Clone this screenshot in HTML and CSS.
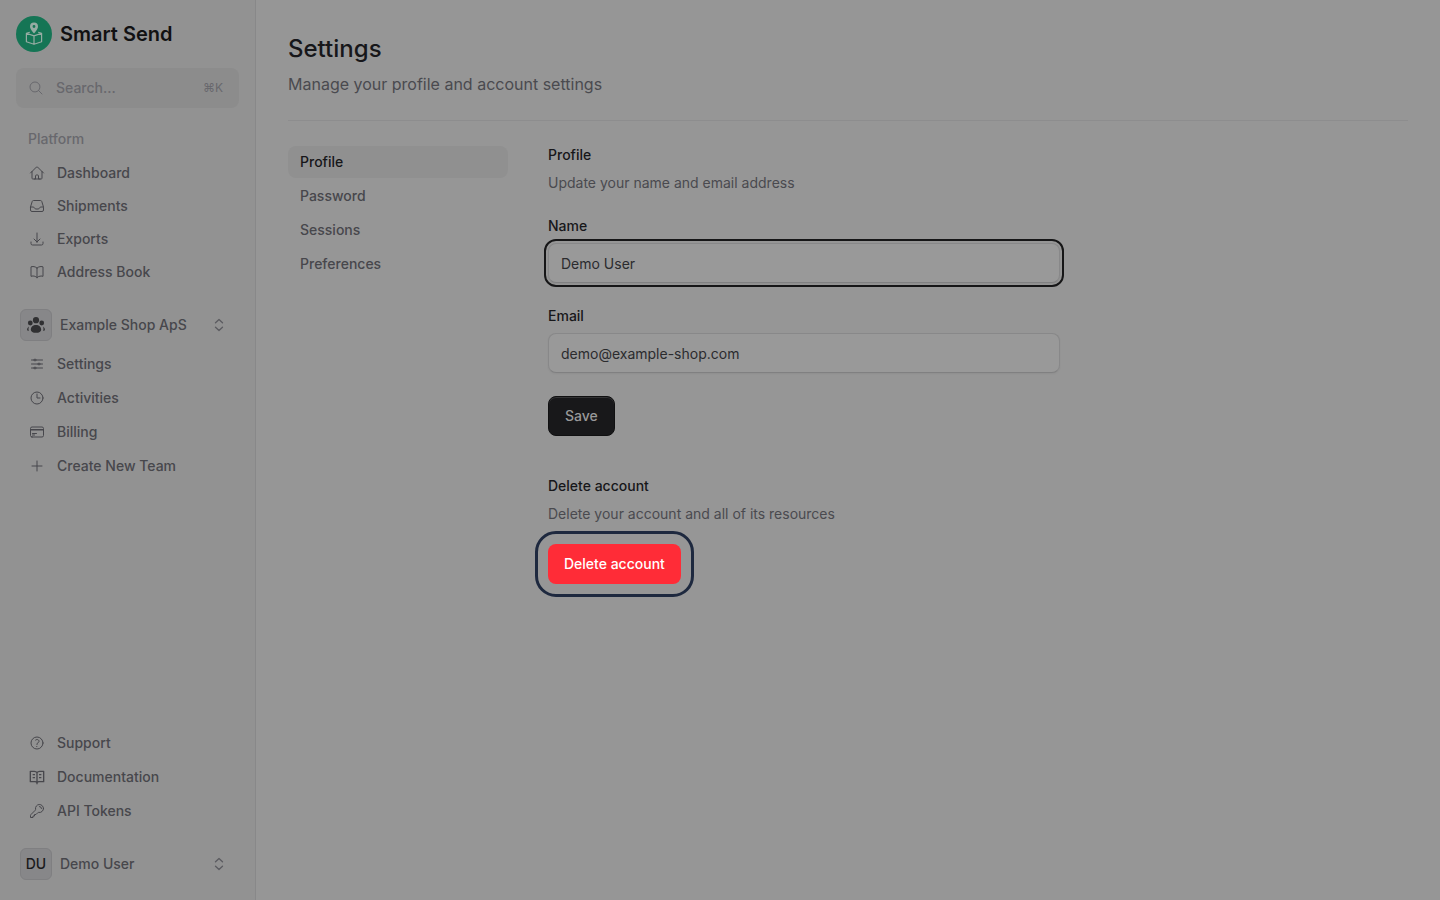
FILE: index.html
```html
<!DOCTYPE html>
<html lang="en">
<head>
  <meta charset="UTF-8">
  <meta name="viewport" content="width=device-width, initial-scale=1.0">
  <title>Settings - Smart Send</title>
  <link rel="stylesheet" href="styles.css">
</head>
<body>
  <aside class="sidebar">
    <a href="#" class="brand">
      <svg class="brand-logo" viewBox="0 0 36 36" fill="none">
        <circle cx="18" cy="18" r="18" fill="#157555"/>
        <path d="M18 6.5a4 4 0 0 0-4 4c0 2.900 4 7 4 7s4-4.100 4-7a4 4 0 0 0-4-4zm0 2.600a1.400 1.400 0 1 1 0 2.800 1.400 1.400 0 0 1 0-2.800z" fill="#96aca3" fill-rule="evenodd"/>
        <path d="M13.800 16.200 10.400 17.300v8.500L18 28.300l7.600-2.500v-8.500l-3.400-1.100M10.400 17.300 18 19.900l7.600-2.600M18 19.900v8.400" stroke="#96aca3" stroke-width="1.200" stroke-linejoin="round"/>
      </svg>
      <span>Smart Send</span>
    </a>

    <button type="button" class="search">
      <svg class="icon" viewBox="0 0 24 24"><path d="m21 21-5.197-5.197m0 0A7.500 7.500 0 1 0 5.196 5.196a7.500 7.500 0 0 0 10.607 10.607Z"/></svg>
      <span>Search...</span>
      <kbd>⌘K</kbd>
    </button>

    <nav class="nav">
      <h2 class="nav-heading">Platform</h2>
      <div class="nav-list tight">
        <a href="#" class="nav-item">
          <svg class="icon" viewBox="0 0 24 24"><path d="m2.250 12 8.954-8.955c.44-.439 1.152-.439 1.591 0L21.750 12M4.500 9.750v10.125c0 .621.504 1.125 1.125 1.125H9.750v-4.875c0-.621.504-1.125 1.125-1.125h2.250c.621 0 1.125.504 1.125 1.125V21h4.125c.621 0 1.125-.504 1.125-1.125V9.750M8.250 21h8.250"/></svg>
          Dashboard
        </a>
        <a href="#" class="nav-item">
          <svg class="icon" viewBox="0 0 24 24"><path d="M2.250 13.500h3.860a2.250 2.250 0 0 1 2.012 1.244l.256.512a2.250 2.250 0 0 0 2.013 1.244h3.218a2.250 2.250 0 0 0 2.013-1.244l.256-.512a2.250 2.250 0 0 1 2.013-1.244h3.859m-19.500.338V18a2.250 2.250 0 0 0 2.250 2.250h15A2.250 2.250 0 0 0 21.750 18v-4.162c0-.224-.034-.447-.1-.661L19.240 5.338a2.250 2.250 0 0 0-2.150-1.588H6.911a2.250 2.250 0 0 0-2.150 1.588L2.350 13.177a2.250 2.250 0 0 0-.1.661Z"/></svg>
          Shipments
        </a>
        <a href="#" class="nav-item">
          <svg class="icon" viewBox="0 0 24 24"><path d="M3 16.500v2.250A2.250 2.250 0 0 0 5.250 21h13.500A2.250 2.250 0 0 0 21 18.750V16.500M16.500 12 12 16.500m0 0L7.500 12m4.500 4.500V3"/></svg>
          Exports
        </a>
        <a href="#" class="nav-item">
          <svg class="icon" viewBox="0 0 24 24"><path d="M12 6.042A8.967 8.967 0 0 0 6 3.750c-1.052 0-2.062.18-3 .512v14.250A8.987 8.987 0 0 1 6 18c2.305 0 4.408.867 6 2.292m0-14.250a8.966 8.966 0 0 1 6-2.292c1.052 0 2.062.18 3 .512v14.250A8.987 8.987 0 0 0 18 18a8.967 8.967 0 0 0-6 2.292m0-14.250v14.250"/></svg>
          Address Book
        </a>
      </div>
    </nav>

    <button type="button" class="profile">
      <span class="avatar">
        <svg class="team" viewBox="0 0 20 20">
          <circle cx="10" cy="5.200" r="3.100"/>
          <circle cx="4.300" cy="8" r="2.400"/>
          <circle cx="15.700" cy="8" r="2.400"/>
          <path d="M10 10c-3 0-5.200 2.100-5.200 4.700 0 2.100 2.100 3.100 5.200 3.100s5.200-1 5.200-3.100c0-2.600-2.200-4.700-5.200-4.700zM3 11.500C1.800 12.200 1.100 13.500 1.100 14.700c0 .7.600 1.100 1.700 1.200-.5-1.600-.3-3.100.2-4.400zM17 11.500c1.200.7 1.900 2 1.900 3.200 0 .7-.6 1.100-1.700 1.200.5-1.600.3-3.100-.2-4.400z"/>
        </svg>
      </span>
      <span class="profile-name">Example Shop ApS</span>
      <svg class="chevrons" viewBox="0 0 16 16"><path d="M4.500 5.800 8 2.500l3.500 3.300M4.500 10.200 8 13.500l3.500-3.300"/></svg>
    </button>

    <nav class="nav-list">
      <a href="#" class="nav-item">
        <svg class="icon" viewBox="0 0 24 24"><path d="M10.500 6h9.750M10.500 6a1.500 1.500 0 1 1-3 0m3 0a1.500 1.500 0 1 0-3 0M3.750 6H7.500m3 12h9.750m-9.750 0a1.500 1.500 0 0 1-3 0m3 0a1.500 1.500 0 0 0-3 0m-3.750 0H7.500m9-6h3.750m-3.750 0a1.500 1.500 0 0 1-3 0m3 0a1.500 1.500 0 0 0-3 0m-9.750 0h9.750"/></svg>
        Settings
      </a>
      <a href="#" class="nav-item">
        <svg class="icon" viewBox="0 0 24 24"><path d="M12 6v6h4.500m4.500 0a9 9 0 1 1-18 0 9 9 0 0 1 18 0Z"/></svg>
        Activities
      </a>
      <a href="#" class="nav-item">
        <svg class="icon" viewBox="0 0 24 24"><path d="M2.250 8.250h19.500M2.250 9h19.500m-16.500 5.250h6m-6 2.250h3m-3.750 3h15a2.250 2.250 0 0 0 2.250-2.250V6.750A2.250 2.250 0 0 0 19.500 4.500h-15a2.250 2.250 0 0 0-2.250 2.250v10.500A2.250 2.250 0 0 0 4.500 19.500Z"/></svg>
        Billing
      </a>
      <a href="#" class="nav-item">
        <svg class="icon" viewBox="0 0 24 24"><path d="M12 4.500v15m7.500-7.500h-15"/></svg>
        Create New Team
      </a>
    </nav>

    <nav class="nav-list bottom">
      <a href="#" class="nav-item">
        <svg class="icon" viewBox="0 0 24 24"><path d="M9.879 7.519c1.171-1.025 3.071-1.025 4.242 0 1.172 1.025 1.172 2.687 0 3.712-.203.179-.43.326-.67.442-.745.361-1.450.999-1.450 1.827v.750M21 12a9 9 0 1 1-18 0 9 9 0 0 1 18 0Zm-9 5.250h.008v.008H12v-.008Z"/></svg>
        Support
      </a>
      <a href="#" class="nav-item">
        <svg class="icon bold" viewBox="0 0 24 24"><path d="M12 5.500v14M12 5.500C11 4 9.500 3.500 8 3.500H2V19H9c1.500 0 2.500.5 3 1.500.5-1 1.500-1.500 3-1.500h7V3.500H16c-1.500 0-3 .5-4 2M5.500 8.500H9M5.500 13H9M15 8.500h3.500M15 13h3.500M12 20v3"/></svg>
        Documentation
      </a>
      <a href="#" class="nav-item">
        <svg class="icon" viewBox="0 0 24 24"><path d="M15.750 5.250a3 3 0 0 1 3 3m3 0a6 6 0 0 1-7.029 5.912c-.563-.097-1.159.026-1.563.43L10.500 17.250H8.250v2.250H6v2.250H2.250v-2.818c0-.597.237-1.170.659-1.591l6.499-6.499c.404-.404.527-1 .430-1.563A6 6 0 1 1 21.750 8.250Z"/></svg>
        API Tokens
      </a>
    </nav>

    <button type="button" class="profile user">
      <span class="avatar">DU</span>
      <span class="profile-name">Demo User</span>
      <svg class="chevrons" viewBox="0 0 16 16"><path d="M4.500 5.800 8 2.500l3.500 3.300M4.500 10.200 8 13.500l3.500-3.300"/></svg>
    </button>
  </aside>

  <main class="main">
    <header class="page-header">
      <h1>Settings</h1>
      <p>Manage your profile and account settings</p>
    </header>

    <div class="content">
      <nav class="tabs">
        <a href="#" class="tab active">Profile</a>
        <a href="#" class="tab">Password</a>
        <a href="#" class="tab">Sessions</a>
        <a href="#" class="tab">Preferences</a>
      </nav>

      <div class="panel">
        <section>
          <h3>Profile</h3>
          <p class="sub">Update your name and email address</p>
          <form class="form">
            <div class="field">
              <label for="name">Name</label>
              <input type="text" id="name" name="name" class="focused" value="Demo User">
            </div>
            <div class="field">
              <label for="email">Email</label>
              <input type="email" id="email" name="email" value="demo@example-shop.com">
            </div>
            <button type="submit" class="btn btn-primary">Save</button>
          </form>
        </section>

        <section class="danger">
          <h3>Delete account</h3>
          <p class="sub">Delete your account and all of its resources</p>
          <button type="button" class="btn btn-danger">Delete account</button>
        </section>
      </div>
    </div>
  </main>
</body>
</html>
```
FILE: styles.css
```css
* {
  box-sizing: border-box;
}

body {
  margin: 0;
  min-height: 100vh;
  display: flex;
  background-color: #969696;
  color: #17171a;
  font-family: Inter, "Liberation Sans", sans-serif;
  font-size: 14px;
  line-height: 20px;
  -webkit-font-smoothing: antialiased;
}

h1,
h2,
h3,
p {
  margin: 0;
  font-weight: 500;
}

a {
  color: inherit;
  text-decoration: none;
}

button,
input {
  font: inherit;
}

button {
  cursor: pointer;
}

/* Sidebar */
.sidebar {
  width: 256px;
  flex-shrink: 0;
  display: flex;
  flex-direction: column;
  padding: 16px;
  background-color: #929292;
  border-right: 1px solid #888889;
}

.brand {
  display: flex;
  align-items: center;
  gap: 8px;
  font-size: 20px;
  font-weight: 600;
  color: #111112;
}

.brand-logo {
  width: 36px;
  height: 36px;
}

.search {
  display: flex;
  align-items: center;
  gap: 12px;
  height: 40px;
  margin: 16px 0;
  padding: 0 16px 0 12px;
  border: none;
  border-radius: 8px;
  background-color: #8c8c8c;
  color: #68686d;
  font-weight: 500;
}

.search kbd {
  margin-left: auto;
  font-family: inherit;
  font-size: 12px;
  font-weight: 400;
}

.icon {
  width: 16px;
  height: 16px;
  flex-shrink: 0;
  fill: none;
  stroke: currentColor;
  stroke-width: 1.5;
  stroke-linecap: round;
  stroke-linejoin: round;
}

.icon.bold {
  stroke-width: 2;
  stroke-linecap: butt;
}

.nav-heading {
  margin-bottom: 3px;
  padding-left: 12px;
  font-size: 14px;
  line-height: 30px;
  color: #68686d;
}

.nav-list {
  display: flex;
  flex-direction: column;
  gap: 2px;
}

.nav-list.tight {
  gap: 1px;
}

.nav-list.bottom {
  margin-top: auto;
}

.nav-item {
  display: flex;
  align-items: center;
  gap: 12px;
  height: 32px;
  padding: 0 13px;
  color: #47474c;
  font-weight: 500;
}

.profile {
  display: flex;
  align-items: center;
  gap: 8px;
  margin: 17px 0 3px;
  padding: 4px 12px 4px 4px;
  border: none;
  border-radius: 8px;
  background: none;
  color: #47474c;
  font-weight: 500;
  text-align: left;
}

.profile.user {
  margin-bottom: 0;
}

.avatar {
  display: flex;
  align-items: center;
  justify-content: center;
  width: 32px;
  height: 32px;
  border: 1px solid #7f7f81;
  border-radius: 6px;
  background-color: #878789;
  color: #1a1a1c;
}

.team {
  width: 20px;
  height: 20px;
  fill: #303032;
}

.profile-name {
  flex: 1;
}

.chevrons {
  width: 16px;
  height: 16px;
  fill: none;
  stroke: #5b5b60;
  stroke-width: 1.3;
  stroke-linecap: round;
  stroke-linejoin: round;
}

/* Main */
.main {
  flex: 1;
  padding: 32px;
}

.page-header {
  padding-bottom: 24px;
  border-bottom: 1px solid #8d8d8e;
}

.page-header h1 {
  margin-bottom: 6px;
  font-size: 24px;
  line-height: 34px;
}

.page-header p {
  font-size: 16px;
  line-height: 24px;
  font-weight: 400;
  color: #4a4a4f;
}

.content {
  display: flex;
  align-items: flex-start;
  gap: 40px;
  padding-top: 24px;
}

.tabs {
  width: 220px;
  flex-shrink: 0;
  display: flex;
  flex-direction: column;
  gap: 2px;
  padding-top: 1px;
}

.tab {
  padding: 6px 12px;
  border-radius: 8px;
  font-weight: 500;
  color: #47474c;
}

.tab.active {
  background-color: #909090;
  color: #17171a;
}

.panel {
  flex: 1;
  max-width: 512px;
}

.panel h3 {
  margin-bottom: 8px;
  font-size: 14px;
}

.sub {
  font-weight: 400;
  color: #4a4a4f;
}

.form {
  display: flex;
  flex-direction: column;
  align-items: flex-start;
  gap: 23px;
  margin-top: 23px;
}

.field {
  width: 100%;
}

.field label {
  display: block;
  margin-bottom: 7px;
  font-weight: 500;
}

.field input {
  display: block;
  width: 100%;
  height: 40px;
  padding: 0 12px;
  border: 1px solid #888889;
  border-bottom-color: #808081;
  border-radius: 8px;
  background-color: #999999;
  box-shadow: 0 1px 2px rgba(0, 0, 0, 0.05);
  color: #2b2b2e;
}

.field input.focused {
  outline: 2px solid #161617;
  outline-offset: 2px;
}

.btn {
  height: 40px;
  padding: 0 16px;
  border: none;
  border-radius: 8px;
  font-weight: 500;
}

.btn-primary {
  border: 1px solid #101011;
  background-color: #18181a;
  box-shadow: inset 0 1px 0 rgba(255, 255, 255, 0.12);
  color: #999999;
}

.danger {
  margin-top: 40px;
}

.btn-danger {
  margin-top: 20px;
  background-color: #ff2c37;
  color: #ffffff;
  outline: 3px solid #1e293f;
  outline-offset: 10px;
}
```
